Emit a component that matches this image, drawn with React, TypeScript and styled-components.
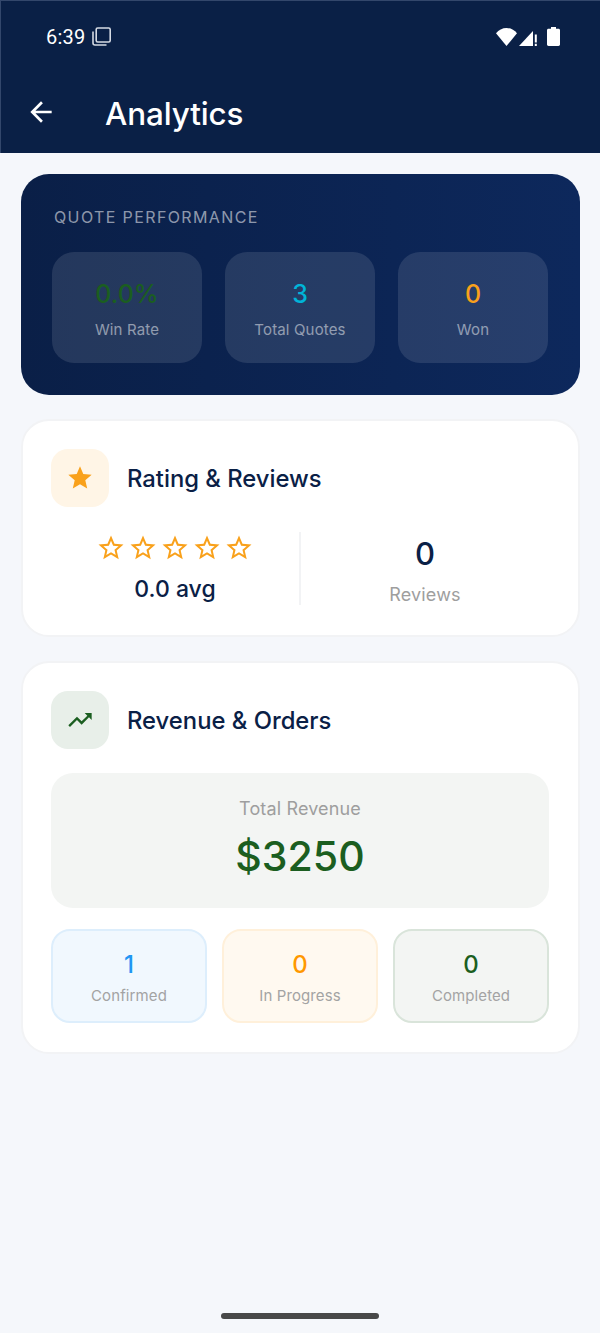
import React from 'react';
import styled, { createGlobalStyle } from 'styled-components';

const GlobalStyle = createGlobalStyle`
  html, body {
    margin: 0;
    padding: 0;
    background: #f5f7fb;
    font-family: Inter, "Noto Sans", sans-serif;
  }
  * { box-sizing: border-box; }
`;

const Page = styled.div`
  width: 600px;
  height: 1333px;
  background: #f5f7fb;
  display: flex;
  flex-direction: column;
  overflow: hidden;
`;

const Header = styled.header`
  height: 153px;
  background: #0a2046;
  border-top: 1px solid #33476b;
  border-left: 1px solid #33476b;
  display: flex;
  flex-direction: column;
  flex-shrink: 0;
`;

const StatusBar = styled.div`
  height: 71px;
  padding: 0 40px 0 45px;
  display: flex;
  align-items: center;
  justify-content: space-between;
  color: #fff;
`;

const Clock = styled.div`
  display: flex;
  align-items: center;
  gap: 7px;
  font-family: Roboto, sans-serif;
  font-size: 20px;
  letter-spacing: 0.2px;
`;

const StatusIcons = styled.div`
  display: flex;
  align-items: center;
  gap: 2px;
`;

const TopBar = styled.div`
  display: flex;
  align-items: center;
  height: 80px;
  padding-left: 24px;
  gap: 48px;
`;

const PageTitle = styled.h1`
  margin: 0 0 -2px;
  padding-top: 2px;
  color: #fff;
  font-size: 31.4px;
  line-height: 40px;
  font-weight: 500;
  letter-spacing: -0.1px;
`;

const Content = styled.main`
  padding: 21px 20px 0 21px;
  display: flex;
  flex-direction: column;
  gap: 24px;
`;

const HeroCard = styled.section`
  height: 221px;
  border-radius: 28px;
  padding: 33px 32px 0 31px;
  background: linear-gradient(90deg, #0a1f47 0%, #0d285c 100%);
`;

const HeroTitle = styled.div`
  margin-left: 2px;
  color: rgba(255, 255, 255, 0.55);
  font-size: 16px;
  line-height: 20px;
  letter-spacing: 1.38px;
  font-weight: 400;
`;

const HeroRow = styled.div`
  margin-top: 25px;
  display: grid;
  grid-template-columns: repeat(3, 150px);
  column-gap: 23px;
`;

const HeroTile = styled.div`
  height: 111px;
  border-radius: 22px;
  background: rgba(255, 255, 255, 0.11);
  display: flex;
  flex-direction: column;
  align-items: center;
  padding-top: 27px;
`;

const HeroValue = styled.div<{ $color: string }>`
  color: ${(p) => p.$color};
  font-size: 25px;
  line-height: 30px;
  font-weight: 500;
`;

const HeroLabel = styled.div`
  margin-top: 11px;
  color: rgba(255, 255, 255, 0.5);
  font-size: 15px;
  line-height: 20px;
  letter-spacing: 0.15px;
`;

const Card = styled.section`
  background: #fff;
  border: 2px solid #f2f3f5;
  border-radius: 28px;
  padding: 28px 29px 29px 28px;
`;

const CardHead = styled.div`
  display: flex;
  align-items: center;
  gap: 18px;
`;

const IconBox = styled.div<{ $bg: string }>`
  width: 58px;
  height: 58px;
  border-radius: 17px;
  background: ${(p) => p.$bg};
  display: flex;
  align-items: center;
  justify-content: center;
`;

const CardTitle = styled.h2`
  margin: 0;
  color: #0a2046;
  font-size: 23.8px;
  font-weight: 500;
`;

const RatingRow = styled.div`
  margin-top: 25px;
  height: 74px;
  display: flex;
  align-items: stretch;
`;

const RatingCol = styled.div`
  flex: 1;
  display: flex;
  flex-direction: column;
  align-items: center;
`;

const Stars = styled.div`
  display: flex;
  gap: 2px;
  height: 30px;
  margin-top: 1px;
`;

const Avg = styled.div`
  margin-top: 11px;
  color: #0a2046;
  font-size: 23px;
  line-height: 30px;
  font-weight: 500;
`;

const Divider = styled.div`
  width: 2px;
  margin-bottom: 1px;
  background: #f2f3f5;
`;

const ReviewsCount = styled.div`
  margin-top: 4px;
  color: #0a2046;
  font-size: 31px;
  line-height: 36px;
  font-weight: 500;
`;

const ReviewsLabel = styled.div`
  margin-top: 12px;
  color: #9e9e9e;
  font-size: 18px;
  line-height: 22px;
  letter-spacing: 0.15px;
`;

const RevenueBox = styled.div`
  margin-top: 24px;
  height: 135px;
  border-radius: 22px;
  background: #f3f5f3;
  display: flex;
  flex-direction: column;
  align-items: center;
  padding-top: 25px;
`;

const RevenueLabel = styled.div`
  color: #9e9e9e;
  font-size: 18px;
  line-height: 22px;
  letter-spacing: 0.15px;
`;

const RevenueValue = styled.div`
  margin-top: 10px;
  color: #1b5e20;
  font-size: 41px;
  line-height: 52px;
  font-weight: 500;
`;

const OrderRow = styled.div`
  margin-top: 21px;
  display: grid;
  grid-template-columns: repeat(3, 156px);
  column-gap: 15px;
`;

const OrderTile = styled.div<{ $bg: string; $border: string }>`
  height: 94px;
  border-radius: 19px;
  background: ${(p) => p.$bg};
  border: 2px solid ${(p) => p.$border};
  display: flex;
  flex-direction: column;
  align-items: center;
  padding-top: 20px;
`;

const OrderValue = styled.div<{ $color: string }>`
  color: ${(p) => p.$color};
  font-size: 24px;
  line-height: 28px;
  font-weight: 500;
`;

const OrderLabel = styled.div`
  margin-top: 7px;
  color: #a3a3a3;
  font-size: 15px;
  line-height: 20px;
  letter-spacing: 0.1px;
`;

const Spacer = styled.div`
  flex: 1;
`;

const HomeBar = styled.div`
  width: 158px;
  height: 6px;
  border-radius: 3px;
  background: #484848;
  margin: 0 auto 14px;
`;

const StarOutline = () => (
  <svg width="30" height="30" viewBox="0 0 24 24" fill="#f9a11b">
    <path d="M22 9.24l-7.19-.62L12 2 9.19 8.63 2 9.24l5.46 4.73L5.82 21 12 17.27 18.18 21l-1.63-7.03L22 9.24zM12 15.4l-3.76 2.27 1-4.28-3.32-2.88 4.38-.38L12 6.1l1.71 4.04 4.38.38-3.32 2.88 1 4.28L12 15.4z" />
  </svg>
);

const stats = [
  { value: '0.0%', label: 'Win Rate', color: '#1b5e20' },
  { value: '3', label: 'Total Quotes', color: '#00b4d8' },
  { value: '0', label: 'Won', color: '#f9a11b' },
];

const orders = [
  { value: '1', label: 'Confirmed', color: '#2196f3', bg: '#f1f8fe', border: '#ddeefc' },
  { value: '0', label: 'In Progress', color: '#ff9800', bg: '#fff9f0', border: '#fff0da' },
  { value: '0', label: 'Completed', color: '#1b5e20', bg: '#f3f5f3', border: '#d9e4da' },
];

export default function App() {
  return (
    <Page>
      <GlobalStyle />
      <Header>
        <StatusBar>
          <Clock>
            6:39
            <svg width="19" height="19" viewBox="0 0 19 19" fill="none" stroke="#d5dae3" strokeWidth="1.6">
              <rect x="4.2" y="1" width="14" height="14" rx="1.5" />
              <path d="M1 4.5v11.5a2 2 0 0 0 2 2h11.5" />
            </svg>
          </Clock>
          <StatusIcons>
            <svg width="21" height="18" viewBox="0 0 21 18" fill="#fff">
              <path d="M10.5 18 0 5.2C2.7 2 6.4 0 10.5 0s7.8 2 10.5 5.2L10.5 18z" />
            </svg>
            <svg width="18" height="18" viewBox="0 0 18 18" fill="#fff">
              <path d="M0 18 14 3v15H0z" />
              <path d="M15.8 6.5h2v8h-2zM15.8 15.8h2V18h-2z" />
            </svg>
            <svg width="13" height="19" viewBox="0 0 13 19" fill="#fff" style={{ marginLeft: 8 }}>
              <path d="M4 0h5v1.8h2.5c.8 0 1.5.6 1.5 1.4v14.4c0 .8-.7 1.4-1.5 1.4h-10C.7 19 0 18.4 0 17.6V3.2C0 2.4.7 1.8 1.5 1.8H4V0z" />
            </svg>
          </StatusIcons>
        </StatusBar>
        <TopBar>
          <svg width="32" height="32" viewBox="0 0 24 24" fill="#fff">
            <path d="M20 11H7.83l5.59-5.59L12 4l-8 8 8 8 1.41-1.41L7.83 13H20v-2z" />
          </svg>
          <PageTitle>Analytics</PageTitle>
        </TopBar>
      </Header>

      <Content>
        <HeroCard>
          <HeroTitle>QUOTE PERFORMANCE</HeroTitle>
          <HeroRow>
            {stats.map((s) => (
              <HeroTile key={s.label}>
                <HeroValue $color={s.color}>{s.value}</HeroValue>
                <HeroLabel>{s.label}</HeroLabel>
              </HeroTile>
            ))}
          </HeroRow>
        </HeroCard>

        <Card>
          <CardHead>
            <IconBox $bg="#fff5e6">
              <svg width="28" height="28" viewBox="0 0 24 24" fill="#f9a11b">
                <path d="M12 17.27 18.18 21l-1.64-7.03L22 9.24l-7.19-.61L12 2 9.19 8.63 2 9.24l5.46 4.73L5.82 21z" />
              </svg>
            </IconBox>
            <CardTitle>Rating &amp; Reviews</CardTitle>
          </CardHead>
          <RatingRow>
            <RatingCol>
              <Stars>
                {[0, 1, 2, 3, 4].map((i) => (
                  <StarOutline key={i} />
                ))}
              </Stars>
              <Avg>0.0 avg</Avg>
            </RatingCol>
            <Divider />
            <RatingCol>
              <ReviewsCount>0</ReviewsCount>
              <ReviewsLabel>Reviews</ReviewsLabel>
            </RatingCol>
          </RatingRow>
        </Card>

        <Card>
          <CardHead>
            <IconBox $bg="#e8efe9">
              <svg width="28" height="28" viewBox="0 0 24 24" fill="#1b5e20">
                <path d="M16 6l2.29 2.29-4.88 4.88-4-4L2 16.59 3.41 18l6-6 4 4 6.3-6.29L22 12V6z" />
              </svg>
            </IconBox>
            <CardTitle>Revenue &amp; Orders</CardTitle>
          </CardHead>
          <RevenueBox>
            <RevenueLabel>Total Revenue</RevenueLabel>
            <RevenueValue>$3250</RevenueValue>
          </RevenueBox>
          <OrderRow>
            {orders.map((o) => (
              <OrderTile key={o.label} $bg={o.bg} $border={o.border}>
                <OrderValue $color={o.color}>{o.value}</OrderValue>
                <OrderLabel>{o.label}</OrderLabel>
              </OrderTile>
            ))}
          </OrderRow>
        </Card>
      </Content>

      <Spacer />
      <HomeBar />
    </Page>
  );
}
